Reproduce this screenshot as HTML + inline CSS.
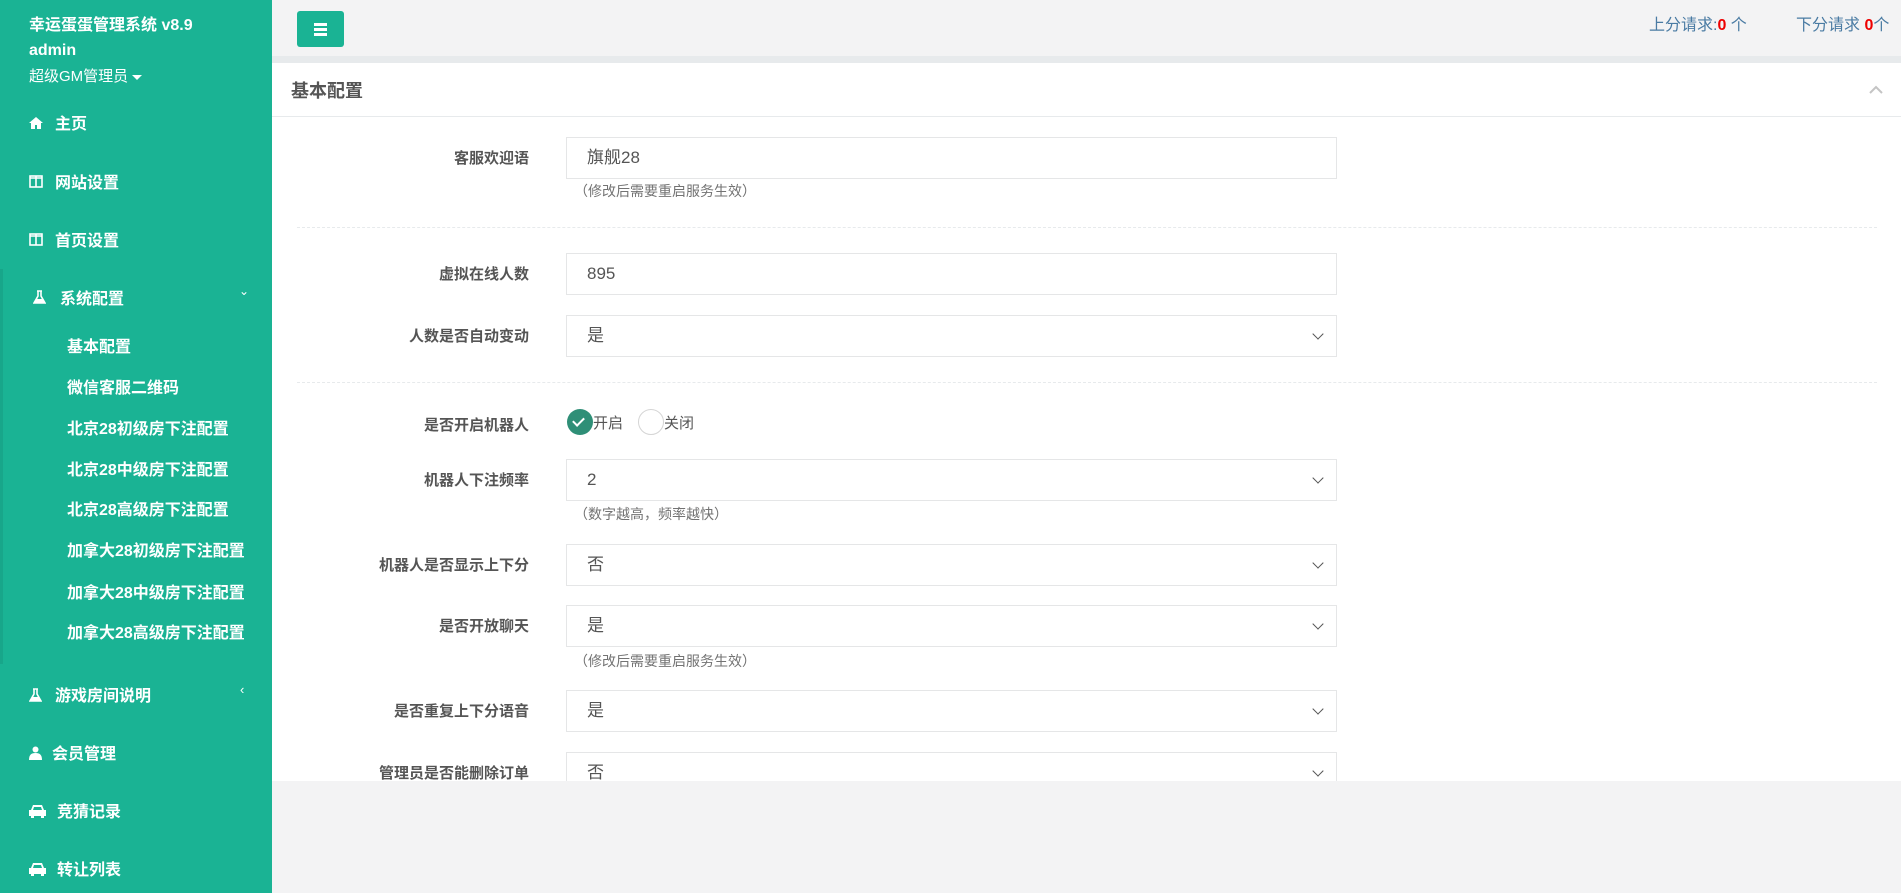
<!DOCTYPE html>
<html><head><meta charset="utf-8">
<style>
*{margin:0;padding:0;box-sizing:border-box}
body{width:1901px;height:893px;overflow:hidden;background:#f3f3f4;font-family:"Liberation Sans","Noto Sans CJK SC",sans-serif;position:relative}
.abs{position:absolute;white-space:nowrap}
#side{position:absolute;left:0;top:0;width:272px;height:893px;background:#1ab394;color:#fff}
#side .t{position:absolute;white-space:nowrap}
.mi{font-size:16px;font-weight:bold;left:55px}
.si{font-size:16px;font-weight:bold;left:67px}
.ic{position:absolute;left:29px}
#hdr{position:absolute;left:272px;top:0;right:0;height:56px;background:#f3f3f4}
#strip{position:absolute;left:272px;top:56px;right:0;height:7px;background:#e7eaec}
#panel{position:absolute;left:272px;top:63px;right:0;height:718px;background:#fff;overflow:hidden}
.lbl{position:absolute;right:calc(100% - 257px);font-size:15px;font-weight:bold;color:#555;white-space:nowrap}
.inp{position:absolute;left:294px;width:771px;height:42px;border:1px solid #e5e6e7;font-size:17px;color:#555;padding:10px 20px;line-height:20px}
.sel::after{content:"";position:absolute;right:14px;top:14px;width:7px;height:7px;border-right:1.5px solid #555;border-bottom:1.5px solid #555;transform:rotate(45deg)}
.help{position:absolute;left:302px;font-size:14px;color:#737373;white-space:nowrap}
.dash{position:absolute;left:25px;width:1580px;border-top:1px dashed #e7eaec}
</style></head><body>
<div id="side">
 <div class="t" style="left:29px;top:11px;font-size:16px;font-weight:bold">幸运蛋蛋管理系统 v8.9</div>
 <div class="t" style="left:29px;top:42px;font-size:16px;font-weight:bold">admin</div>
 <div class="t" style="left:29px;top:65px;font-size:15px">超级GM管理员 <span style="display:inline-block;border-left:5px solid transparent;border-right:5px solid transparent;border-top:5px solid #fff;vertical-align:middle"></span></div>
 <svg class="ic" style="top:117px" width="14" height="12" viewBox="0 0 14 12"><path d="M7 0L0 6h2v6h4V8h2v4h4V6h2z" fill="#fff"/></svg>
 <div class="t mi" style="top:110px">主页</div>
 <svg class="ic" style="top:175px" width="14" height="13" viewBox="0 0 14 13"><rect x="1" y="1" width="12" height="11" fill="none" stroke="#fff" stroke-width="1.6"/><path d="M7 1v11M1 3h12" stroke="#fff" stroke-width="1.6"/></svg>
 <div class="t mi" style="top:169px">网站设置</div>
 <svg class="ic" style="top:233px" width="14" height="13" viewBox="0 0 14 13"><rect x="1" y="1" width="12" height="11" fill="none" stroke="#fff" stroke-width="1.6"/><path d="M7 1v11M1 3h12" stroke="#fff" stroke-width="1.6"/></svg>
 <div class="t mi" style="top:227px">首页设置</div>
 <div style="position:absolute;left:0;top:269px;width:3px;height:395px;background:#18a68a"></div>
 <svg class="ic" style="top:290px;left:33px" width="13" height="14" viewBox="0 0 13 14"><path d="M4 1h5M5 1v5L1 13h11L8 6V1" fill="none" stroke="#fff" stroke-width="1.6"/><path d="M3 9h7l2 4H1z" fill="#fff"/></svg>
 <div class="t mi" style="top:285px;left:60px">系统配置</div>
 <div class="t" style="left:239px;top:284px;font-size:12px">&#8964;</div>
 <div class="t si" style="top:333px">基本配置</div>
 <div class="t si" style="top:374px">微信客服二维码</div>
 <div class="t si" style="top:415px">北京28初级房下注配置</div>
 <div class="t si" style="top:456px">北京28中级房下注配置</div>
 <div class="t si" style="top:496px">北京28高级房下注配置</div>
 <div class="t si" style="top:537px">加拿大28初级房下注配置</div>
 <div class="t si" style="top:579px">加拿大28中级房下注配置</div>
 <div class="t si" style="top:619px">加拿大28高级房下注配置</div>
 <svg class="ic" style="top:688px" width="13" height="14" viewBox="0 0 13 14"><path d="M4 1h5M5 1v5L1 13h11L8 6V1" fill="none" stroke="#fff" stroke-width="1.6"/><path d="M3 9h7l2 4H1z" fill="#fff"/></svg>
 <div class="t mi" style="top:682px">游戏房间说明</div>
 <div class="t" style="left:240px;top:682px;font-size:13px">&lsaquo;</div>
 <svg class="ic" style="top:746px" width="13" height="14" viewBox="0 0 13 14"><circle cx="6.5" cy="3.5" r="3" fill="#fff"/><path d="M0 14c0-5 2-7 6.5-7S13 9 13 14z" fill="#fff"/></svg>
 <div class="t mi" style="top:740px;left:52px">会员管理</div>
 <svg class="ic" style="top:804px" width="17" height="14" viewBox="0 0 17 14"><path d="M4 1h9l2 5h2v6h-2v2h-3v-2H5v2H2v-2H0V6h2z" fill="#fff"/><path d="M5 3h7l1 3H4z" fill="#1ab394"/></svg>
 <div class="t mi" style="top:798px;left:57px">竞猜记录</div>
 <svg class="ic" style="top:862px" width="17" height="14" viewBox="0 0 17 14"><path d="M4 1h9l2 5h2v6h-2v2h-3v-2H5v2H2v-2H0V6h2z" fill="#fff"/><path d="M5 3h7l1 3H4z" fill="#1ab394"/></svg>
 <div class="t mi" style="top:856px;left:57px">转让列表</div>
</div>
<div id="hdr"></div>
<div style="position:absolute;left:297px;top:11px;width:47px;height:36px;background:#1ab394;border-radius:3px">
 <div style="position:absolute;left:17px;top:12px;width:13px;height:2.5px;background:#fff;box-shadow:0 5px 0 #fff,0 10px 0 #fff"></div>
</div>
<div class="abs" style="left:1649px;top:11px;font-size:16px;color:#4a7ba3">上分请求:<b style="color:#e00">0</b> 个</div>
<div class="abs" style="left:1796px;top:11px;font-size:16px;color:#4a7ba3">下分请求 <b style="color:#e00">0</b>个</div>
<div id="strip"></div>
<div id="panel">
 <div class="abs" style="left:19px;top:14px;font-size:18px;font-weight:bold;color:#555">基本配置</div>
 <svg class="abs" style="left:1597px;top:22px" width="14" height="9" viewBox="0 0 14 9"><path d="M1 8l6-6 6 6" fill="none" stroke="#c4c4c4" stroke-width="2"/></svg>
 <div style="position:absolute;left:0;right:0;top:53px;border-top:1px solid #e7eaec"></div>

 <div class="lbl" style="top:84px">客服欢迎语</div>
 <div class="inp" style="top:74px">旗舰28</div>
 <div class="help" style="top:118px">（修改后需要重启服务生效）</div>
 <div class="dash" style="top:164px"></div>

 <div class="lbl" style="top:200px">虚拟在线人数</div>
 <div class="inp" style="top:190px">895</div>
 <div class="lbl" style="top:262px">人数是否自动变动</div>
 <div class="inp sel" style="top:252px">是</div>
 <div class="dash" style="top:319px"></div>

 <div class="lbl" style="top:351px">是否开启机器人</div>
 <div style="position:absolute;left:295px;top:346px;width:26px;height:26px;border-radius:50%;background:#2f8f77"><div style="position:absolute;left:8px;top:6px;width:7px;height:11px;border-right:2.5px solid #fff;border-bottom:2.5px solid #fff;transform:rotate(45deg)"></div></div>
 <div class="abs" style="left:321px;top:349px;font-size:15px;color:#555">开启</div>
 <div style="position:absolute;left:366px;top:346px;width:26px;height:26px;border-radius:50%;border:1.5px solid #d5d5d5"></div>
 <div class="abs" style="left:392px;top:349px;font-size:15px;color:#555">关闭</div>

 <div class="lbl" style="top:406px">机器人下注频率</div>
 <div class="inp sel" style="top:396px">2</div>
 <div class="help" style="top:441px">（数字越高，频率越快）</div>
 <div class="lbl" style="top:491px">机器人是否显示上下分</div>
 <div class="inp sel" style="top:481px">否</div>
 <div class="lbl" style="top:552px">是否开放聊天</div>
 <div class="inp sel" style="top:542px">是</div>
 <div class="help" style="top:588px">（修改后需要重启服务生效）</div>
 <div class="lbl" style="top:637px">是否重复上下分语音</div>
 <div class="inp sel" style="top:627px">是</div>
 <div class="lbl" style="top:699px">管理员是否能删除订单</div>
 <div class="inp sel" style="top:689px">否</div>
</div>
</body></html>
